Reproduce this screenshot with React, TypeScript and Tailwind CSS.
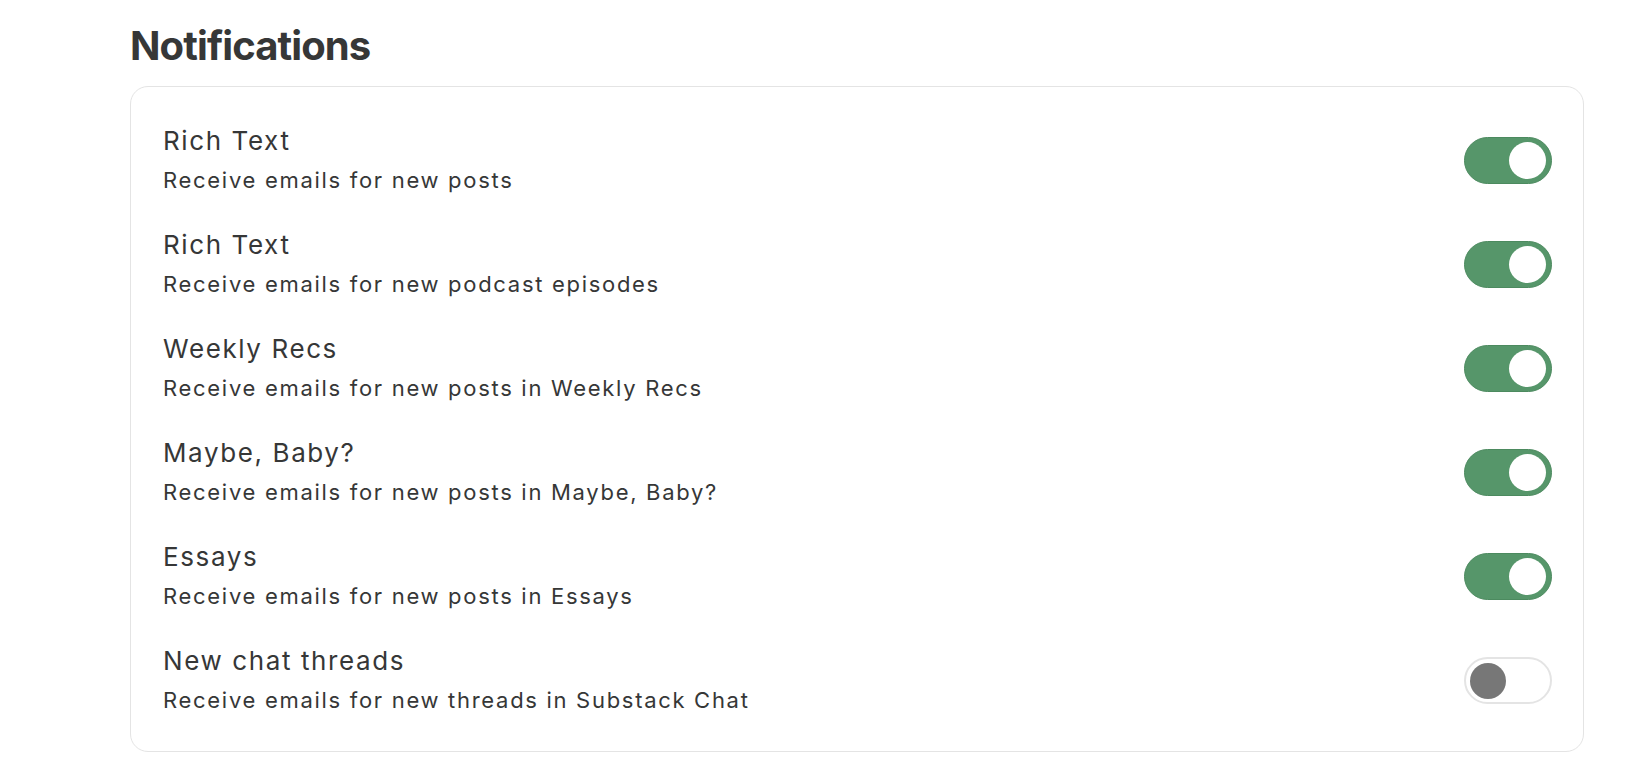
import { useState } from 'react';

type Pref = {
  id: number;
  title: string;
  description: string;
  enabled: boolean;
};

const initialPrefs: Pref[] = [
  { id: 1, title: 'Rich Text', description: 'Receive emails for new posts', enabled: true },
  { id: 2, title: 'Rich Text', description: 'Receive emails for new podcast episodes', enabled: true },
  { id: 3, title: 'Weekly Recs', description: 'Receive emails for new posts in Weekly Recs', enabled: true },
  { id: 4, title: 'Maybe, Baby?', description: 'Receive emails for new posts in Maybe, Baby?', enabled: true },
  { id: 5, title: 'Essays', description: 'Receive emails for new posts in Essays', enabled: true },
  { id: 6, title: 'New chat threads', description: 'Receive emails for new threads in Substack Chat', enabled: false },
];

const Toggle = ({ on, onClick }: { on: boolean; onClick: () => void }) => (
  <button
    onClick={onClick}
    className={
      on
        ? 'w-[88px] h-[47px] rounded-full bg-[#56966a] border border-[#4c8a5f] flex items-center justify-end pr-[5px] shrink-0'
        : 'w-[88px] h-[47px] rounded-full bg-white border-2 border-[#e4e4e4] flex items-center justify-start pl-[4px] shrink-0'
    }
  >
    {on ? (
      <span className="w-[37px] h-[37px] rounded-full bg-white block" />
    ) : (
      <span className="w-[36px] h-[36px] rounded-full bg-[#777777] block" />
    )}
  </button>
);

const App = () => {
  const [prefs, setPrefs] = useState<Pref[]>(initialPrefs);

  const toggle = (id: number) => {
    setPrefs(prev => prev.map(p => (p.id === id ? { ...p, enabled: !p.enabled } : p)));
  };

  return (
    <div className="min-h-screen bg-white font-['Inter',sans-serif] text-[#363737]">
      <div className="pl-[130px] pt-[22px]">
        {/* Header */}
        <h1 className="text-[40px] leading-[48px] font-bold tracking-[-0.9px]">Notifications</h1>

        {/* Settings card */}
        <div className="mt-4 w-[1454px] border border-[#e4e4e4] rounded-[18px] pl-8 pr-[31px] pt-[39px] pb-[36px] flex flex-col gap-[35px]">
          {prefs.map(pref => (
            <div key={pref.id} className="flex items-center justify-between">
              <div>
                <div className="text-[26px] leading-[30px] tracking-[1.6px]">{pref.title}</div>
                <div className="text-[22px] leading-[30px] mt-[9px] tracking-[1.7px]">{pref.description}</div>
              </div>
              <Toggle on={pref.enabled} onClick={() => toggle(pref.id)} />
            </div>
          ))}
        </div>
      </div>
    </div>
  );
};

export default App;
